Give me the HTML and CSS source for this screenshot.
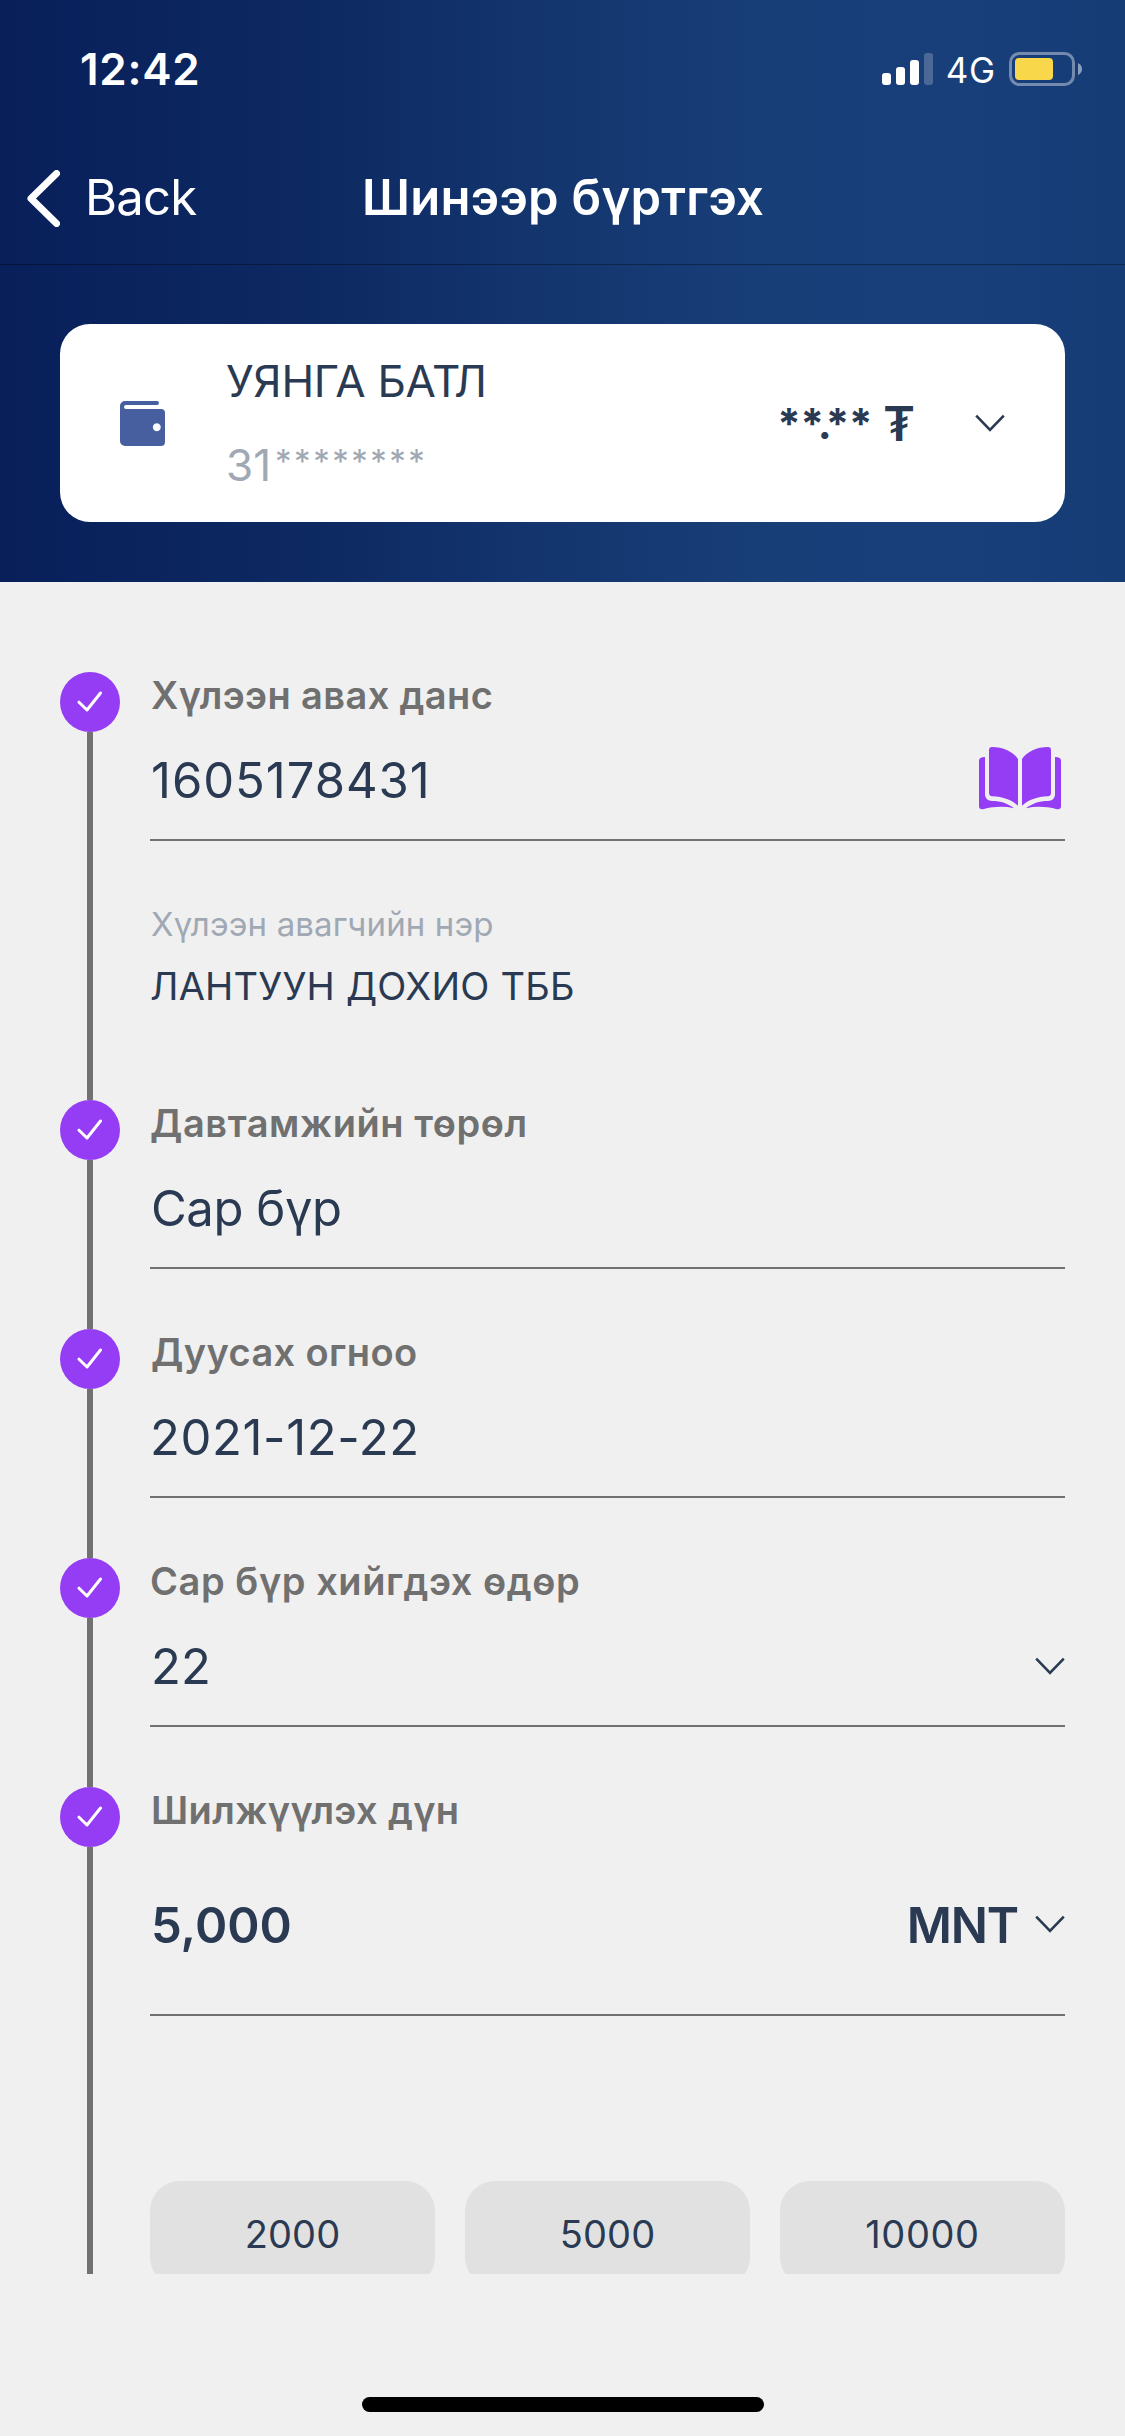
FILE: index.html
```html
<!DOCTYPE html>
<html lang="mn">
<head>
<meta charset="utf-8">
<title>Шинээр бүртгэх</title>
<link rel="stylesheet" href="styles.css">
</head>
<body>
<svg class="defs" aria-hidden="true">
  <symbol id="check" viewBox="0 0 26 22"><path d="M2 11.2 10 19 23.5 2"/></symbol>
  <symbol id="chevron" viewBox="0 0 30 18"><path d="M1.2 1.6 15 15.8 28.8 1.6"/></symbol>
</svg>
<div class="screen">
  <header class="top">
    <div class="status">
      <span class="time">12:42</span>
      <div class="indicators">
        <div class="signal"><i class="bar b1"></i><i class="bar b2"></i><i class="bar b3"></i><i class="bar b4"></i></div>
        <span class="network">4G</span>
        <svg class="battery" viewBox="0 0 74 34"><rect class="shell" x="1.5" y="1.5" width="63" height="31" rx="9"/><rect class="charge" x="6" y="6" width="38" height="22" rx="4"/><path class="nub" d="M69 11q4 2 4 6t-4 6z"/></svg>
      </div>
    </div>
    <nav class="nav">
      <a class="back"><svg class="back-icon" viewBox="0 0 33 57"><path d="M29.5 3.5 4 28.5 29.5 53.5"/></svg><span>Back</span></a>
      <h1 class="title">Шинээр бүртгэх</h1>
    </nav>
  </header>
  <section class="band">
    <div class="account">
      <svg class="wallet" viewBox="0 0 45 45"><path fill-rule="evenodd" d="M5 0H37a2 2 0 0 1 0 4H6a2 2 0 0 0 0 4H41a4 4 0 0 1 4 4V41a4 4 0 0 1-4 4H5a5 5 0 0 1-5-5V5a5 5 0 0 1 5-5zM36.8 22.3a4 4 0 1 0 .01 0z"/></svg>
      <div class="owner">
        <div class="owner-name">УЯНГА БАТЛ</div>
        <div class="owner-number">31<span class="mask">********</span></div>
      </div>
      <div class="balance"><span class="stars">**</span><span class="point">.</span><span class="stars">**</span><span class="currency">₮</span></div>
      <svg class="chevron"><use href="#chevron"/></svg>
    </div>
  </section>
  <main class="form">
    <div class="step">
      <div class="rail"><span class="dot"><svg><use href="#check"/></svg></span></div>
      <div class="body">
        <div class="label">Хүлээн авах данс</div>
        <div class="field"><span class="value account-no">1605178431</span>
          <svg class="book" viewBox="0 0 82 63"><g id="half"><path d="M13 0C24 0 34 4.500 39 12V58.700C33 53 24 49.700 13 49.300Q10 49 10 46V3Q10 0 13 0z"/><path d="M6 10V48Q6.500 53.500 13 54C22 54 29 56.500 35 61.300C25 59 15 59.500 4 62.200Q0 62.700 0 59V13.500Q0 10 6 10z"/></g><use href="#half" transform="matrix(-1 0 0 1 82 0)"/></svg>
        </div>
        <div class="receiver">
          <div class="receiver-label">Хүлээн авагчийн нэр</div>
          <div class="receiver-name">ЛАНТУУН ДОХИО ТББ</div>
        </div>
      </div>
    </div>
    <div class="step">
      <div class="rail"><span class="dot"><svg><use href="#check"/></svg></span></div>
      <div class="body">
        <div class="label wide">Давтамжийн төрөл</div>
        <div class="field"><span class="value text">Сар бүр</span></div>
      </div>
    </div>
    <div class="step">
      <div class="rail"><span class="dot"><svg><use href="#check"/></svg></span></div>
      <div class="body">
        <div class="label">Дуусах огноо</div>
        <div class="field"><span class="value date">2021-12-22</span></div>
      </div>
    </div>
    <div class="step">
      <div class="rail"><span class="dot"><svg><use href="#check"/></svg></span></div>
      <div class="body">
        <div class="label wide">Сар бүр хийгдэх өдөр</div>
        <div class="field"><span class="value">22</span><svg class="chevron"><use href="#chevron"/></svg></div>
      </div>
    </div>
    <div class="step">
      <div class="rail"><span class="dot"><svg><use href="#check"/></svg></span></div>
      <div class="body">
        <div class="label">Шилжүүлэх дүн</div>
        <div class="field amount"><span class="value">5,000</span><span class="unit">MNT<svg class="chevron"><use href="#chevron"/></svg></span></div>
        <div class="presets"><button>2000</button><button>5000</button><button class="ten">10000</button></div>
      </div>
    </div>
  </main>
  <footer class="home"><span class="home-bar"></span></footer>
</div>
</body>
</html>
```
FILE: styles.css
```css
* { box-sizing: border-box; }
body { margin: 0; background: #f0f0f0; color: #2a3a52; font-family: Inter, "Noto Sans", sans-serif; }
.defs { display: none; }
svg { display: block; flex: none; }
.screen { width: 1125px; height: 2436px; display: flex; flex-direction: column; overflow: hidden; }

.top, .band { background: linear-gradient(90deg, #081f5a 0%, #0e2a63 30%, #14366f 50%, #183e78 68%, #183f7a 85%, #163c76 100%); }
.top { height: 265px; border-bottom: 1px solid rgba(0, 0, 0, .35); color: #fff; }
.status { height: 138px; padding: 0 42px 0 80px; display: flex; align-items: center; justify-content: space-between; }
.time { font-size: 44px; font-weight: 600; letter-spacing: .7px; line-height: 60px; }
.indicators { display: flex; align-items: center; }
.signal { display: flex; align-items: flex-end; gap: 5px; height: 32px; }
.bar { width: 9px; border-radius: 3px; background: #fff; }
.b1 { height: 12px; }
.b2 { height: 18px; }
.b3 { height: 25px; }
.b4 { height: 32px; opacity: .22; }
.network { margin: 2px 13px 0 13px; font-size: 35px; line-height: 48px; letter-spacing: .8px; }
.battery { width: 74px; height: 34px; }
.shell { fill: none; stroke: #fff; stroke-opacity: .4; stroke-width: 3; }
.charge { fill: #f8d74a; }
.nub { fill: #fff; fill-opacity: .5; }
.nav { height: 120px; padding-left: 27px; display: grid; grid-template-columns: 335px 1fr; align-items: center; }
.back { display: flex; align-items: center; gap: 25px; font-size: 49px; line-height: 64px; letter-spacing: -.8px; }
.back-icon { width: 33px; height: 57px; }
.back-icon path { fill: none; stroke: #fff; stroke-width: 7; stroke-linecap: round; stroke-linejoin: round; }
.title { margin: 0; font-size: 49px; font-weight: 600; line-height: 64px; letter-spacing: .26px; }

.band { height: 317px; padding: 59px 60px 60px; }
.account { height: 198px; padding: 0 60px; border-radius: 30px; background: #fff; display: flex; align-items: center; }
.wallet { width: 45px; height: 45px; margin-top: 1px; fill: #475f9f; }
.owner { flex: 1; margin-left: 61px; display: grid; gap: 24px; font-size: 44px; line-height: 60px; }
.owner-name { letter-spacing: -.28px; }
.owner-number { color: #a0a8b4; }
.mask { margin-left: 4px; font-size: 33px; line-height: 1; letter-spacing: 2.5px; vertical-align: 8px; }
.balance { display: flex; align-items: center; font-weight: 700; font-size: 42px; line-height: 60px; }
.stars { letter-spacing: -.2px; margin-top: 2px; }
.point { width: 2px; display: flex; justify-content: center; margin-top: 2px; }
.currency { margin: 2px 0 0 11px; font-size: 48px; font-weight: 600; }
.chevron { width: 30px; height: 18px; fill: none; stroke: #2a3a52; stroke-width: 2.6; }
.account .chevron { margin-left: 60px; }

.form { height: 1692px; padding: 90px 60px 0; overflow: hidden; }
.step { display: grid; grid-template-columns: 60px 1fr; column-gap: 30px; }
.rail { display: flex; flex-direction: column; align-items: center; }
.rail::after { content: ""; flex: 1; width: 6px; background: #717171; }
.dot { width: 60px; height: 60px; border-radius: 50%; background: #943df4; display: flex; align-items: center; justify-content: center; }
.dot svg { width: 26px; height: 22px; fill: none; stroke: #fff; stroke-width: 3; stroke-linecap: round; stroke-linejoin: round; }
.body { padding-bottom: 60px; }
.label { height: 47px; padding-left: 1px; font-size: 38px; font-weight: 600; line-height: 47px; letter-spacing: .38px; color: #707070; }
.label.wide { letter-spacing: .56px; padding-left: 0; }
.field { height: 122px; padding: 31px 0 29px; border-bottom: 2px solid #717171; display: flex; align-items: center; justify-content: space-between; }
.value { padding: 1px 0 0 1px; font-size: 49px; line-height: 60px; }
.account-no { letter-spacing: .95px; }
.text { letter-spacing: -.44px; }
.date { letter-spacing: .6px; padding-left: 0; }
.book { width: 82px; height: 63px; margin: -3px 4px 0 0; fill: #943df4; }
.receiver { padding: 59px 0 30px; line-height: 48px; }
.receiver-label { margin-bottom: 14px; padding-left: 1px; font-size: 33px; letter-spacing: .14px; color: #a0a8b4; }
.receiver-name { font-size: 38px; letter-spacing: .23px; }
.amount { height: 182px; padding: 61px 0 59px; font-weight: 600; }
.unit { padding-top: 1px; display: flex; align-items: center; gap: 17px; font-size: 49px; line-height: 60px; letter-spacing: -1.2px; }
.unit .chevron { margin-top: -3px; }
.presets { margin-top: 165px; display: grid; grid-template-columns: repeat(3, 1fr); gap: 30px; }
.presets button { height: 106px; padding: 0; border: 0; border-radius: 30px; background: #e1e1e1; color: inherit; font: 400 38px/60px Inter, sans-serif; letter-spacing: .13px; }
.presets .ten { letter-spacing: .6px; }
.home { flex: 1; display: flex; align-items: flex-end; justify-content: center; padding: 0 0 24px 1px; }
.home-bar { width: 402px; height: 15px; border-radius: 7.5px; background: #000; }
```
